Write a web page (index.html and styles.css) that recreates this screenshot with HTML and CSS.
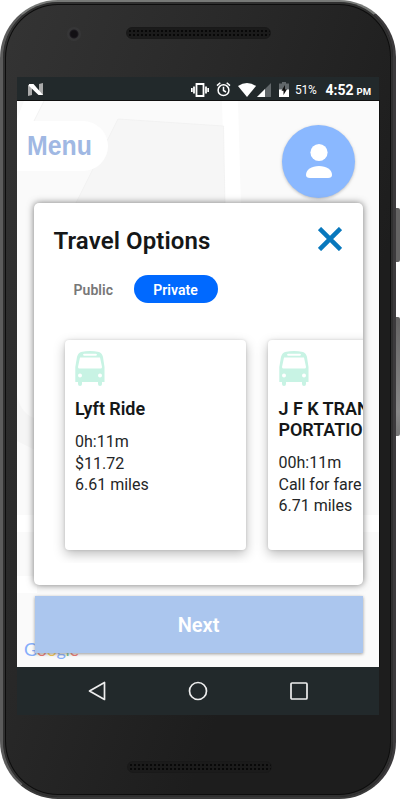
FILE: index.html
```html
<!DOCTYPE html>
<html lang="en">
<head>
<meta charset="utf-8">
<title>Travel Options</title>
<link rel="stylesheet" href="styles.css">
</head>
<body>
<div class="device">
  <i class="side-button power"></i>
  <i class="side-button volume"></i>
  <div class="body">
    <header class="forehead">
      <i class="camera"></i>
      <i class="speaker"></i>
    </header>
    <main class="screen">
      <div class="status">
        <svg class="nougat" width="16" height="13" viewBox="0 0 16 13"><path fill="#aaa" d="M0 2l4-1v11l-4 1zM11 1l4-1v12h-4z"/><path fill="#fff" d="M1 1h4.500L15 12h-4.500L1 3z"/></svg>
        <svg class="vibrate" width="18" height="14" viewBox="0 0 18 14"><path fill="none" stroke="#fff" stroke-width="1.800" d="M5.500 1h7v12h-7zM3 3.500v7M15 3.500v7M.8 5v4M17.200 5v4"/></svg>
        <svg class="alarm" width="15" height="15" viewBox="0 0 14 15"><g fill="none" stroke="#fff" stroke-width="1.500"><circle cx="7" cy="8.200" r="5.400"/><path d="M7 4.800v3.700l2.500 1.500M.5 3.600L3.800.8M13.500 3.600L10.200.8"/></g></svg>
        <svg class="wifi" width="18" height="14" viewBox="0 0 18 14"><path fill="#fff" d="M0 3Q9-3 18 3L9 14z"/></svg>
        <svg class="signal" width="14" height="14" viewBox="0 0 14 14"><path fill="#61676a" d="M14 0v14H0z"/><path fill="#fff" d="M8 6v8H0z"/></svg>
        <svg class="battery" width="10" height="15" viewBox="0 0 10 15"><path fill="#61676a" d="M3 0h4v1.500h3V8H0V1.500h3z"/><path fill="#fff" d="M0 7.500h10V15H0z"/><path fill="#111" d="M6 3L2.500 8.700h2V13L8 7.300H6z"/></svg>
        <span class="percent">51%</span>
        <span class="clock">4:52<small>PM</small></span>
      </div>
      <section class="map">
        <svg class="map-roads" width="362" height="566" viewBox="0 0 362 566"><path fill="#fff" d="M7 0h20L8 37 0 50V18zM205 0h16l3 106h-16zM0 414h362v17H0zM0 475h20v17H0z"/><path fill="#f6f6f6" stroke="#efefef" stroke-width=".7" d="M57 106L101 18l105.500 7 1.500 81"/><path fill="none" stroke="#eee" stroke-width=".7" d="M27 0L17 20"/><path fill="#f5f5f5" d="M0 294q4 20 20 24v32l-20-10z"/></svg>
        <div class="google"><b>G</b><b>o</b><b>o</b><b>g</b><b>l</b><b>e</b></div>
        <div class="map-controls">
          <div class="menu"><span>Menu</span></div>
          <div class="avatar"><svg width="28" height="37" viewBox="0 0 28 37"><circle cx="14" cy="9.500" r="8.600" fill="#fff"/><path fill="#fff" d="M1 32c0-5.500 5.500-9 13-9s13 3.500 13 9q0 3-4 3H5q-4 0-4-3z"/></svg></div>
        </div>
        <article class="panel">
          <div class="panel-head">
            <h1>Travel Options</h1>
            <svg class="close" width="24" height="24" viewBox="0 0 24 24"><path fill="none" stroke="#0878bd" stroke-width="4.500" d="M1.500 1.500l21 21M22.500 1.500l-21 21"/></svg>
          </div>
          <div class="tabs"><span class="public">Public</span><span class="private">Private</span></div>
          <div class="cards">
            <section class="card">
              <svg class="bus" width="30" height="36" viewBox="0 0 30 36"><path fill="#c8f3e4" fill-rule="evenodd" d="M6 1Q15-.8 24 1q3 1 4 5l1.500 10v15H27v2q0 2-2 2t-2-2v-2H7v2q0 2-2 2t-2-2v-2H.3V16L2 6q1-4 4-5zM9 2.800q-2 1 0 2h12q2-1 0-2zM5 6.500L3 16q0 1.500 1.500 1.500h21Q27 17.500 27 16L25 6.500zM5 22.500a2 2 0 1 0 0 4 2 2 0 1 0 0-4zM25 22.500a2 2 0 1 0 0 4 2 2 0 1 0 0-4z"/></svg>
              <h2>Lyft Ride</h2>
              <p>0h:11m<br>$11.72<br>6.61 miles</p>
            </section>
            <section class="card">
              <svg class="bus" width="30" height="36" viewBox="0 0 30 36"><path fill="#c8f3e4" fill-rule="evenodd" d="M6 1Q15-.8 24 1q3 1 4 5l1.500 10v15H27v2q0 2-2 2t-2-2v-2H7v2q0 2-2 2t-2-2v-2H.3V16L2 6q1-4 4-5zM9 2.800q-2 1 0 2h12q2-1 0-2zM5 6.500L3 16q0 1.500 1.500 1.500h21Q27 17.500 27 16L25 6.500zM5 22.500a2 2 0 1 0 0 4 2 2 0 1 0 0-4zM25 22.500a2 2 0 1 0 0 4 2 2 0 1 0 0-4z"/></svg>
              <h2>J F K TRAN<br>PORTATIO</h2>
              <p>00h:11m<br>Call for fare<br>6.71 miles</p>
            </section>
          </div>
        </article>
        <div class="next">Next</div>
      </section>
      <nav class="navigation">
        <svg width="18" height="20" viewBox="0 0 18 20"><path fill="none" stroke="#eee" stroke-width="1.700" stroke-linejoin="round" d="M16.500 1.500v17L1.500 10z"/></svg>
        <svg width="20" height="20" viewBox="0 0 20 20"><circle cx="10" cy="10" r="8.500" fill="none" stroke="#eee" stroke-width="1.700"/></svg>
        <svg width="18" height="18" viewBox="0 0 18 18"><rect x="1" y="1" width="16" height="16" rx="1" fill="none" stroke="#eee" stroke-width="1.700"/></svg>
      </nav>
    </main>
    <footer class="chin"><i class="speaker"></i></footer>
  </div>
</div>
</body>
</html>
```

FILE: styles.css
```css
* { box-sizing: border-box; }
body { margin: 0; background: #fff; font-family: Roboto, sans-serif; color: #151718; }
h1, h2, p { margin: 0; }
i { display: block; }
svg { display: block; flex: none; }
.device { position: relative; width: 400px; height: 800px; overflow: hidden; }
.side-button { position: absolute; right: 0; width: 6px; background: #656464; border-radius: 0 2px 2px 0; }
.power { top: 208px; height: 54px; }
.volume { top: 317px; height: 119px; background: linear-gradient(#656464, #888 80%, #777); }
.body { position: relative; width: 396px; height: 799px; padding: 2px 14px 0; border-radius: 58px 57px 57px 58px; background: linear-gradient(110deg, #343434 0%, #292929 35%, #1d1d1d 70%); border: solid; border-width: 2px 3px 2px 3px; border-color: #777977 #3c3a3c #3a3a3a #5c5c5c; box-shadow: inset 0 0 0 2px #303030, inset 0 0 0 3px #0d0d0d; }
.forehead { height: 73px; display: flex; padding: 23px 0 0 50px; }
.camera { width: 14px; height: 14px; border-radius: 50%; background: radial-gradient(circle at 50% 50%, #121014 0 3px, #1c191f 4px, #363637 5px); margin: 0 45px 0 0; }
.speaker { width: 145px; height: 12px; border: 1px solid #191919; border-radius: 6px; background: radial-gradient(circle, #080808 0 .8px, #1b1b1b 1.300px) 1px 1px / 4px 4px; }
.screen { width: 363px; height: 638px; }
.status { height: 23px; width: 362px; background: #22292b; color: #fff; display: flex; align-items: center; padding: 2px 8px 0 11px; }
.vibrate { margin-left: 147px; }
.alarm { margin-left: 7px; }
.wifi { margin-left: 7px; }
.signal { margin-left: 1px; }
.battery { margin-left: 8px; }
.percent { width: 23px; margin-left: 6px; font-size: 12px; letter-spacing: -.2px; }
.clock { margin-left: 8px; font-size: 14px; font-weight: 700; white-space: nowrap; }
.clock small { font-size: 9.500px; margin-left: 3px; }
.map { position: relative; height: 567px; border: 1px solid #101010; border-width: 1px 1px 0 0; background: #fafafa; overflow: hidden; }
.map-roads { position: absolute; inset: 0; }
.map-controls { position: relative; height: 102px; display: flex; justify-content: space-between; align-items: flex-start; padding: 20px 24px 0 0; }
.menu { width: 91px; height: 50px; padding-left: 10px; background: #fff; border-radius: 0 25px 25px 0; color: #a0b8e3; font: bold 27px/50px "Liberation Sans", sans-serif; }
.menu span { display: inline-block; transform: scaleX(.92); transform-origin: left; }
.avatar { width: 73px; height: 73px; margin-top: 4px; border-radius: 50%; background: #8ab8ff; display: flex; justify-content: center; align-items: center; box-shadow: 0 1px 3px #8888; }
.panel { position: relative; width: 329.500px; height: 382px; margin-left: 16.500px; background: #fff; border-radius: 5px; box-shadow: 0 0 7px #555c; }
.panel-head { height: 72px; padding: 24px 21px 0 20px; display: flex; justify-content: space-between; }
h1 { font-size: 24px; line-height: 28px; font-weight: 600; letter-spacing: .1px; }
.tabs { height: 28px; display: flex; font-size: 14px; line-height: 30px; font-weight: 600; letter-spacing: .05px; }
.public { width: 60px; margin-left: 40px; color: #777; }
.private { width: 84px; height: 28px; border-radius: 14px; background: #0069ff; color: #fff; text-align: center; }
.cards { height: 260px; display: flex; gap: 22.500px; padding: 37px 0 0 31px; overflow: hidden; }
.card { width: 181px; height: 210px; flex: none; padding: 11px 10.500px; background: #fff; border-radius: 4px; box-shadow: 0 4px 12px #0004, 0 0 3px #0002; }
h2 { margin-top: 11px; font-size: 18px; line-height: 21px; font-weight: 600; letter-spacing: -.05px; white-space: nowrap; }
.card p { margin-top: 12px; font-size: 16px; line-height: 21.500px; color: #242627; }
.next { position: relative; width: 328px; height: 57px; margin: 11px 0 0 17.500px; background: #abc6ee; color: #fff; text-align: center; line-height: 58px; font-size: 20px; font-weight: 600; box-shadow: 0 1px 3px #777b; }
.google { position: absolute; left: 7px; top: 537px; font: 18px/22px Lato, sans-serif; letter-spacing: -.3px; }
.google b { font-weight: 400; color: #85aefa; }
.google b:nth-child(2), .google b:nth-child(6) { color: #ed756d; }
.google b:nth-child(3) { color: #f5c54c; }
.google b:nth-child(5) { color: #73bc85; }
.navigation { width: 362px; height: 48px; background: #22292b; display: flex; justify-content: space-between; align-items: center; padding: 0 71px; }
.chin { padding: 46px 0 0 110px; }
```
